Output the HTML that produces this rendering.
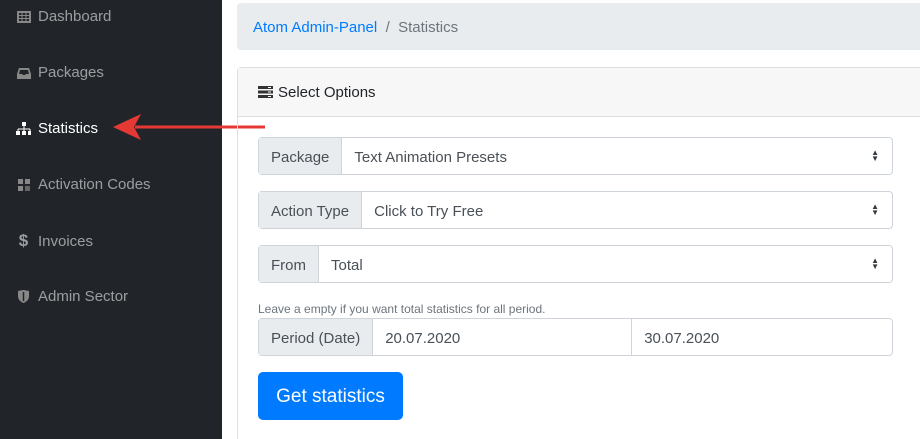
<!DOCTYPE html>
<html><head><meta charset="utf-8"><style>
*{box-sizing:border-box;margin:0;padding:0}
html,body{width:920px;height:439px;overflow:hidden}
body{background:#fff;font-family:"Liberation Sans",sans-serif;position:relative;color:#495057}
.side{position:absolute;left:0;top:0;width:222px;height:439px;background:#212529}
.nav{position:absolute;left:16px;font-size:15px;color:rgba(255,255,255,.55);display:flex;align-items:center;gap:7px}
.nav.act{color:#fff}
.ic{width:15px;display:inline-flex;justify-content:center}
.bc{position:absolute;left:237px;top:3px;width:700px;height:47px;background:#e9ecef;border-radius:4px;font-size:15px;padding:16px 16px;color:#6c757d}
.bc a{color:#007bff}
.card{position:absolute;left:237px;top:67px;width:700px;height:380px;border:1px solid #dfdfdf;border-radius:4px}
.ch{height:49px;background:#f7f7f7;border-bottom:1px solid #dfdfdf;font-size:15px;color:#212529;padding:17px 20px;display:flex;align-items:center;gap:5px}
.ig{position:absolute;left:258px;width:635px;height:38px;display:flex;border:1px solid #ced4da;border-radius:4px;font-size:15px}
.lb{background:#e9ecef;border-right:1px solid #ced4da;padding:0 12px;display:flex;align-items:center;color:#495057;padding-top:2px}
.val{flex:1;padding:2px 12px 0;display:flex;align-items:center;position:relative}
.arr{position:absolute;right:13px;top:12px;font-size:8px;line-height:6px;color:#343a40}
.small{position:absolute;left:258px;top:302px;font-size:12px;color:#6c757d}
.btn{position:absolute;left:258px;top:372px;width:145px;height:48px;background:#007bff;color:#fff;border-radius:5px;font-size:19px;display:flex;align-items:center;justify-content:center;padding-top:2px}
</style></head><body>
<div class="side">
<div class="nav" style="top:8px"><span class="ic"><svg width="14" height="12"><rect x="1" y="1" width="12" height="10" fill="none" stroke="#888" stroke-width="2"/><path d="M0 4.5h14M0 7.5h14M5 0v12M9 0v12" stroke="#888"/></svg></span>Dashboard</div>
<div class="nav" style="top:64px"><span class="ic"><svg width="14" height="12"><path d="M2 1h10l2 6v5H0V7z" fill="#888"/><path d="M3 3h8l1 4H9l-1 1H6L5 7H2z" fill="#212529"/></svg></span>Packages</div>
<div class="nav act" style="top:120px"><span class="ic"><svg width="16" height="13"><rect x="6" y="0" width="4" height="4" fill="#fff"/><path d="M8 4v3M2 7h12M2 7v2M14 7v2M8 7v2" stroke="#fff"/><rect x="0" y="9" width="4" height="4" fill="#fff"/><rect x="6" y="9" width="4" height="4" fill="#fff"/><rect x="12" y="9" width="4" height="4" fill="#fff"/></svg></span>Statistics</div>
<div class="nav" style="top:176px"><span class="ic"><svg width="12" height="12"><rect x="0" y="0" width="5" height="5" fill="#888"/><rect x="7" y="0" width="5" height="5" fill="#888"/><rect x="0" y="7" width="5" height="5" fill="#888"/><rect x="7" y="7" width="5" height="5" fill="#666"/></svg></span>Activation Codes</div>
<div class="nav" style="top:231px"><span class="ic" style="font-weight:bold;font-size:17px">$</span>Invoices</div>
<div class="nav" style="top:288px"><span class="ic"><svg width="11" height="13"><path d="M0 1l5.5-1 5.5 1v5c0 4-3 6-5.5 7C3 12 0 10 0 6z" fill="#888"/><path d="M5.5 2v9" stroke="#212529" stroke-width="1.5"/></svg></span>Admin Sector</div>
</div>
<svg style="position:absolute;left:110px;top:110px" width="160" height="34"><path d="M25 17H155" stroke="#e53935" stroke-width="3"/><path d="M3 17L31 4 24 17 31 30z" fill="#e53935"/></svg>
<div class="bc"><a>Atom Admin-Panel</a>&nbsp;&nbsp;/&nbsp;&nbsp;Statistics</div>
<div class="card"><div class="ch"><svg width="15" height="12"><rect x="0" y="0" width="15" height="3" fill="#333"/><rect x="0" y="4.5" width="15" height="3" fill="#333"/><rect x="0" y="9" width="15" height="3" fill="#333"/><path d="M10 1.5h3M10 6h3M10 10.5h3" stroke="#fff"/></svg>Select Options</div></div>
<div class="ig" style="top:137px"><div class="lb">Package</div><div class="val">Text Animation Presets<span class="arr">▲<br>▼</span></div></div>
<div class="ig" style="top:191px"><div class="lb">Action Type</div><div class="val">Click to Try Free<span class="arr">▲<br>▼</span></div></div>
<div class="ig" style="top:245px"><div class="lb">From</div><div class="val">Total<span class="arr">▲<br>▼</span></div></div>
<div class="small">Leave a empty if you want total statistics for all period.</div>
<div class="ig" style="top:318px"><div class="lb">Period (Date)</div><div class="val" style="flex:0 0 259px;border-right:1px solid #ced4da">20.07.2020</div><div class="val">30.07.2020</div></div>
<div class="btn">Get statistics</div>
</body></html>
